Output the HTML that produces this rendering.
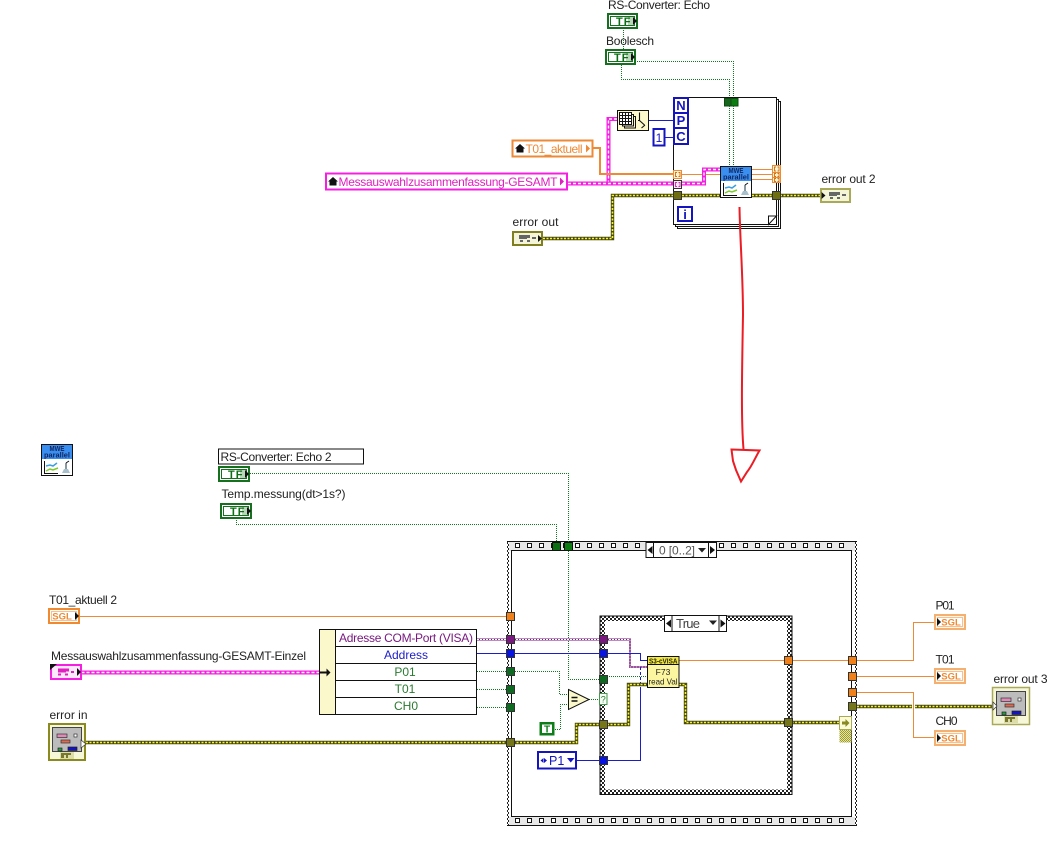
<!DOCTYPE html>
<html><head><meta charset="utf-8"><title>Block Diagram</title>
<style>
html,body{margin:0;padding:0;background:#fff;width:1063px;height:855px;overflow:hidden}
svg{display:block;font-family:"Liberation Sans",sans-serif}
text{fill:#222;font-size:12px}
.g{fill:none;stroke:#0f7a20;stroke-width:1;stroke-dasharray:1 1}
.o{fill:none;stroke:#ee8a35;stroke-width:1}
.b{fill:none;stroke:#1c1cc8;stroke-width:1}
.pu1{fill:none;stroke:#7a1a80;stroke-width:2}
.pu2{fill:none;stroke:#fff;stroke-width:1;stroke-dasharray:2 1}
.p1{fill:none;stroke:#f41fe0;stroke-width:4}
.p2{fill:none;stroke:#fff;stroke-width:1.4;stroke-dasharray:3 2}
.e1{fill:none;stroke:#4a4a0a;stroke-width:3.4}
.e2{fill:none;stroke:#f4f430;stroke-width:1.6;stroke-dasharray:2 1.5}
</style></head><body>
<svg width="1063" height="855" viewBox="0 0 1063 855" xmlns="http://www.w3.org/2000/svg">
<defs>
<pattern id="ck" width="4" height="4" patternUnits="userSpaceOnUse"><rect width="4" height="4" fill="#fff"/><rect width="2" height="2" fill="#222"/><rect x="2" y="2" width="2" height="2" fill="#222"/></pattern>
<pattern id="hole" x="512" y="542" width="12" height="20" patternUnits="userSpaceOnUse"><rect x="3.500" y="1.500" width="4" height="4" fill="#fff" stroke="#111"/></pattern>
<pattern id="hole2" x="512" y="817" width="12" height="20" patternUnits="userSpaceOnUse"><rect x="3.500" y="1.500" width="4" height="4" fill="#fff" stroke="#111"/></pattern>
<pattern id="khaki" width="2" height="2" patternUnits="userSpaceOnUse"><rect width="2" height="2" fill="#e6e6a0"/><rect width="1" height="1" fill="#9a9a30"/><rect x="1" y="1" width="1" height="1" fill="#9a9a30"/></pattern>
</defs>

<!-- TOP: wires outside loop -->
<path class="g" d="M623.500 28V49"/>
<path class="g" d="M637 61.500H733.500V97"/>
<path class="g" d="M621.500 65V79.500H729.500V97"/>
<path class="b" d="M649 120.500H673M665 137.500H673"/>
<path class="p1" d="M617 119H608.500V183"/>
<path class="p2" d="M617 119H608.500V183"/>
<path fill="none" stroke="#ee8a35" stroke-width="2" d="M593 148H600V174H673"/>
<path class="p1" d="M568 183.500H673"/>
<path class="p2" d="M568 183.500H673"/>
<path class="e1" d="M543 238.500H612.500V195.500H673"/>
<path class="e2" d="M543 238.500H612.500V195.500H673"/>
<path class="e1" d="M780 195.500H820"/><path class="e2" d="M780 195.500H820"/>

<!-- For loop -->
<rect x="677.500" y="101.500" width="103" height="127" fill="#fff" stroke="#111"/>
<rect x="675.500" y="99.500" width="103" height="127" fill="#fff" stroke="#111"/>
<rect x="673.500" y="97.500" width="103" height="127" fill="#fff" stroke="#111"/>
<path d="M776.500 216L768.500 224.500V216Z" fill="#fff" stroke="#111"/>
<g fill="#fff" stroke="#1414c0" stroke-width="2">
<rect x="674" y="98" width="14" height="15"/><rect x="674" y="113" width="14" height="15"/><rect x="674" y="128" width="14" height="16"/><rect x="678" y="207" width="14" height="14"/>
</g>
<text x="681" y="110" text-anchor="middle" style="fill:#1414c0;font-size:13px;font-weight:bold">N</text>
<text x="681" y="125" text-anchor="middle" style="fill:#1414c0;font-size:13px;font-weight:bold">P</text>
<text x="681" y="141" text-anchor="middle" style="fill:#1414c0;font-size:13px;font-weight:bold">C</text>
<text x="685" y="219" text-anchor="middle" style="fill:#1414c0;font-size:13px;font-weight:bold">i</text>
<rect x="724.500" y="98.500" width="6.500" height="7.500" fill="#17661d" stroke="#0e4a12"/>
<rect x="731" y="98.500" width="7" height="7.500" fill="#0b7d10" stroke="#0e4a12"/>
<path class="g" d="M729.500 106V166M733.500 106V166"/>
<path class="o" d="M682 174.500H720M752 169.500H772M752 174.500H772M752 179.500H772"/>
<path class="p1" d="M682 183.500H704V169.500H720"/><path class="p2" d="M682 183.500H704V169.500H720"/>
<path class="e1" d="M682 195.500H720M752 195.500H772"/><path class="e2" d="M682 195.500H720M752 195.500H772"/>
<!-- loop tunnels -->
<g fill="#fdf2d0" stroke="#ee8a35"><rect x="673.500" y="170.500" width="8" height="8"/><rect x="772.500" y="165.500" width="8" height="7"/><rect x="772.500" y="172.500" width="8" height="5"/><rect x="772.500" y="177.500" width="8" height="5"/></g>
<rect x="673.500" y="180.500" width="8" height="8" fill="#fde8f8" stroke="#333"/>
<g fill="none" stroke="#d07010" stroke-width=".9"><path d="M677 172.500h-1.500v4h1.500M678.500 172.500h1.500v4h-1.500M776 167h-1.500v4h1.500M777.500 167h1.500v4h-1.500M776 173.500h-1.500v3h1.500M777.500 173.500h1.500v3h-1.500M776 178.500h-1.500v3h1.500M777.500 178.500h1.500v3h-1.500"/></g>
<path d="M677 182.500h-1.500v4h1.500M678.500 182.500h1.500v4h-1.500" fill="none" stroke="#e020c0" stroke-width=".9"/>
<rect x="673.500" y="191.500" width="8" height="8" fill="#6e6e10" stroke="#333"/>
<rect x="772.500" y="191.500" width="8" height="8" fill="#6e6e10" stroke="#333"/>

<!-- MWE icon in loop -->
<g transform="translate(720,166)">
<rect x=".5" y=".5" width="31" height="31" fill="#fff" stroke="#111"/><rect x="1" y="1" width="30" height="14" fill="#3a8ef0"/>
<text x="8.500" y="7" textLength="15" lengthAdjust="spacingAndGlyphs" style="font-size:7px;font-weight:bold;fill:#10245c">MWE</text>
<text x="3" y="13.500" textLength="26" lengthAdjust="spacingAndGlyphs" style="font-size:7px;font-weight:bold;fill:#10245c">parallel</text>
<path d="M3.500 17V29.500H17" fill="none" stroke="#111"/><path d="M5 22l4-1 3 1 4-3" fill="none" stroke="#3aa0e0" stroke-width="1.500"/><path d="M5 27l4-2 3 1 5-2" fill="none" stroke="#7ccc2a" stroke-width="1.500"/>
<path d="M25 19V25" stroke="#8a98a0" stroke-width="2"/><path d="M21 29l2-4h4l2 4z" fill="#a8c0cc"/><path d="M25 19l3-2" stroke="#111"/>
</g>

<!-- terminals top -->
<text x="608" y="9" textLength="102">RS-Converter: Echo</text>
<g transform="translate(607,13)"><rect x="1" y="1" width="29" height="14" fill="#fff" stroke="#17701f" stroke-width="2"/><rect x="3.500" y="3.500" width="24" height="9" fill="#fff" stroke="#17701f"/><rect x="21" y="4" width="6" height="8" fill="#b8d8b8"/><text x="9" y="12" style="font-size:11px;font-weight:bold;fill:#0c6e14;letter-spacing:1px">TF</text><path d="M26 4l4 4-4 4z" fill="#111"/></g>
<text x="606" y="45" textLength="48">Boolesch</text>
<g transform="translate(605,49)"><rect x="1" y="1" width="29" height="14" fill="#fff" stroke="#17701f" stroke-width="2"/><rect x="3.500" y="3.500" width="24" height="9" fill="#fff" stroke="#17701f"/><rect x="21" y="4" width="6" height="8" fill="#b8d8b8"/><text x="9" y="12" style="font-size:11px;font-weight:bold;fill:#0c6e14;letter-spacing:1px">TF</text><path d="M26 4l4 4-4 4z" fill="#111"/></g>

<!-- table icon -->
<rect x="617.500" y="110.500" width="31" height="20" fill="#fbf8cc" stroke="#111"/>
<g fill="none" stroke="#111"><rect x="619.500" y="112.500" width="12" height="12" fill="#fff"/><path d="M622.500 112.500v12M625.500 112.500v12M628.500 112.500v12M619.500 115.500h12M619.500 118.500h12M619.500 121.500h12"/><path d="M631.500 114.500h2v11.500h-11v-1.500M633.500 116.500h2v11.500h-11v-2"/><path d="M639.500 112.500v8l5 4.500m-5-4.500h-1.500M641.500 128l3.500-3" stroke-width="1.100"/></g>
<rect x="653.500" y="129" width="11" height="16.500" fill="#fff" stroke="#1414c0" stroke-width="2"/>
<text x="659" y="142" text-anchor="middle" style="font-size:12px;fill:#1414c0">1</text>

<!-- local vars -->
<rect x="512.500" y="140.500" width="80" height="16" fill="#fff" stroke="#ee8a35" stroke-width="2"/>
<path d="M520 144l-5 4.500h1.500v4h7v-4h1.500z" fill="#111"/>
<text x="525.500" y="153" textLength="57" style="fill:#ee8a35">T01_aktuell</text>
<path d="M586 144.500l4 4-4 4z" fill="#ee8a35"/>
<rect x="326" y="173.500" width="241" height="16" fill="#fff" stroke="#f41fe0" stroke-width="2"/>
<path d="M333 177l-5 4.500h1.500v4h7v-4h1.500z" fill="#111"/>
<text x="338.500" y="186" textLength="219" style="fill:#e020c0">Messauswahlzusammenfassung-GESAMT</text>
<path d="M560 177.500l4 4-4 4z" fill="#e020c0"/>

<text x="512.500" y="226" textLength="46">error out</text>
<g transform="translate(512,231)"><rect x="1" y="1" width="29" height="13" fill="#f4f4d8" stroke="#7f7f20" stroke-width="2"/><path d="M7 4h11v3h-3v1H7zM8 9h3v2H8zM15 9h3v2h-3zM20 6h4v2h-4z" fill="#666"/><path d="M26 4l4 3.500-4 3.500z" fill="#111"/></g>
<text x="821.500" y="183" textLength="54">error out 2</text>
<g transform="translate(820,188)"><rect x="1" y="1" width="29" height="13" fill="#f4f4d8" stroke="#a9a95a" stroke-width="2"/><path d="M1.500 4l4 3.500-4 3.500z" fill="#111"/><path d="M9 4h11v3h-3v1H9zM10 9h3v2h-3zM17 9h3v2h-3zM22 6h4v2h-4z" fill="#666"/></g>

<!-- red arrow -->
<path d="M739.500 207C740 240 743 275 743 315 742 370 741 420 743.500 449" fill="none" stroke="#ec1c24" stroke-width="2"/>
<path d="M731.500 449.500L759.500 450.500C755 458 752 466 747 472L741 481.500 736 470 733 461Z" fill="none" stroke="#ec1c24" stroke-width="2"/>

<!-- MWE icon free -->
<g transform="translate(41,444)">
<rect x=".5" y=".5" width="31" height="31" fill="#fff" stroke="#111"/><rect x="1" y="1" width="30" height="14" fill="#3a8ef0"/>
<text x="8.500" y="7" textLength="15" lengthAdjust="spacingAndGlyphs" style="font-size:7px;font-weight:bold;fill:#10245c">MWE</text>
<text x="3" y="13.500" textLength="26" lengthAdjust="spacingAndGlyphs" style="font-size:7px;font-weight:bold;fill:#10245c">parallel</text>
<path d="M3.500 17V29.500H17" fill="none" stroke="#111"/><path d="M5 22l4-1 3 1 4-3" fill="none" stroke="#3aa0e0" stroke-width="1.500"/><path d="M5 27l4-2 3 1 5-2" fill="none" stroke="#7ccc2a" stroke-width="1.500"/>
<path d="M25 19V25" stroke="#8a98a0" stroke-width="2"/><path d="M21 29l2-4h4l2 4z" fill="#a8c0cc"/><path d="M25 19l3-2" stroke="#111"/>
</g>

<!-- Sequence -->
<rect x="507" y="542" width="350" height="283" fill="#fff"/>
<rect x="507" y="542" width="2" height="283" fill="url(#ck)"/>
<rect x="855" y="542" width="2" height="283" fill="url(#ck)"/>
<rect x="509" y="542" width="346" height="9" fill="#e8e8e8"/>
<rect x="509" y="817" width="346" height="8" fill="#e8e8e8"/>
<rect x="512" y="542" width="336" height="8" fill="url(#hole)"/>
<rect x="512" y="817" width="336" height="8" fill="url(#hole2)"/>
<path d="M507 541.500H857M507 825.500H857" stroke="#111"/>
<rect x="511.500" y="550.500" width="340" height="266" fill="#fff" stroke="#111"/>
<rect x="646" y="542.500" width="70.500" height="15" fill="#fff" stroke="#111"/>
<path d="M653.500 542.500v15M708.500 542.500v15" stroke="#111"/>
<path d="M647.500 550l5-4v8zM710 546l5 4-5 4z" fill="#111"/>
<text x="659" y="554.500" textLength="36" style="fill:#555">0 [0..2]</text>
<path d="M698 548h8l-4 4.500z" fill="#222"/>

<!-- Case -->
<rect x="600" y="616" width="192" height="178.500" fill="url(#ck)" stroke="#111"/>
<rect x="605" y="621" width="182" height="168.500" fill="#fff"/>
<rect x="664.500" y="615.500" width="62" height="16" fill="#fff" stroke="#111"/>
<path d="M672 615.500v16M719 615.500v16" stroke="#111"/>
<path d="M666 623.500l5-4v8zM720.500 619.500l5 4-5 4z" fill="#111"/>
<text x="676" y="628" textLength="24" style="font-size:13px;fill:#444">True</text>
<path d="M709 620.500h8l-4 4.500z" fill="#222"/>

<!-- wires bottom -->
<path class="g" d="M250 473.500H568.500V679.500H599"/>
<path class="g" d="M236.500 518V524.500H556.500V542"/>
<path class="o" d="M80 616.500H507"/>
<path class="p1" d="M81.500 672.500H320"/><path class="p2" d="M81.500 672.500H320"/>
<path class="pu1" d="M477 639.500H630V667H647"/><path class="pu2" d="M477 639.500H630V667H647"/>
<path class="b" d="M477 653.500H640.500V660.500H647"/>
<path class="b" d="M576.500 760.500H640.500V688"/>
<path class="b" d="M640.500 667V688" style="stroke-dasharray:3 2"/>
<path class="g" d="M477 671.500H559.500V694.500H568M477 689.500H507M477 707.500H507"/>
<path class="g" d="M555 729.500H560.500V704.500H568M589 699.500H599M607 676.500H647"/>
<path class="e1" d="M86 742.500H576.500V724.500H628.500V684.500H647"/><path class="e2" d="M86 742.500H576.500V724.500H628.500V684.500H647"/>
<path class="e1" d="M679 684.500H685.500V722.500H839"/><path class="e2" d="M679 684.500H685.500V722.500H839"/>
<path class="o" d="M679 660.500H848M857 660.500H913.500V622.500H934.500M857 676.500H934.500M857 692.500H913.500V737.500H934.500"/>
<path class="e1" d="M857 706.500H912M915 706.500H993"/><path class="e2" d="M857 706.500H912M915 706.500H993"/>

<!-- tunnels -->
<rect x="552.500" y="542.500" width="8" height="8" fill="#0b6e10" stroke="#111"/>
<rect x="564.500" y="542.500" width="8" height="8" fill="#0b7d10" stroke="#111"/>
<g stroke="#333">
<rect x="506.500" y="612.500" width="8" height="8" fill="#f0801a"/>
<rect x="506.500" y="635.500" width="8" height="8" fill="#7a1a80"/>
<rect x="506.500" y="649.500" width="8" height="8" fill="#0a14e0"/>
<rect x="506.500" y="667.500" width="8" height="8" fill="#0e6a20"/>
<rect x="506.500" y="685.500" width="8" height="8" fill="#0e6a20"/>
<rect x="506.500" y="703.500" width="8" height="8" fill="#0e6a20"/>
<rect x="506.500" y="738.500" width="8" height="8" fill="#75751a"/>
<rect x="599.500" y="635.500" width="8" height="8" fill="#7a1a80"/>
<rect x="599.500" y="649.500" width="8" height="8" fill="#0a14e0"/>
<rect x="599.500" y="675.500" width="8" height="8" fill="#0e6a20"/>
<rect x="599.500" y="720.500" width="8" height="8" fill="#75751a"/>
<rect x="599.500" y="756.500" width="8" height="8" fill="#0a14e0"/>
<rect x="784.500" y="656.500" width="8" height="8" fill="#f0801a"/>
<rect x="784.500" y="718.500" width="8" height="8" fill="#75751a"/>
<rect x="848.500" y="656.500" width="8" height="8" fill="#f0801a"/>
<rect x="848.500" y="672.500" width="8" height="8" fill="#f0801a"/>
<rect x="848.500" y="688.500" width="8" height="8" fill="#f0801a"/>
<rect x="848.500" y="702.500" width="8" height="8" fill="#75751a"/>
</g>
<rect x="599.500" y="693.500" width="7.500" height="11" fill="#f2fff2" stroke="#3f9a4a"/>
<text x="603.300" y="702.500" text-anchor="middle" style="font-size:9px;fill:#2a7a30">?</text>
<rect x="839.500" y="716.500" width="12" height="13" fill="#fbfbd8" stroke="#a9a95a"/>
<path d="M842 721.500h3.500v-2.500l4 4-4 4v-2.500H842z" fill="#8a8a20"/>
<rect x="839.500" y="730" width="12" height="12.500" fill="url(#khaki)"/>

<!-- Equal, T constant, P1 -->
<path d="M568.500 689.500L589 699.500 568.500 709.500Z" fill="#fbf8cc" stroke="#111"/>
<path d="M571.500 697.500h6M571.500 701h6" stroke="#111" stroke-width="1.500"/>
<rect x="539.500" y="722" width="15" height="13.500" fill="#0d7d1a"/>
<rect x="542" y="724.500" width="10" height="8.500" fill="#fff"/>
<text x="547" y="732.700" text-anchor="middle" style="font-size:10px;font-weight:bold;fill:#0d7d1a">T</text>
<rect x="538" y="752" width="38" height="16.500" fill="#fff" stroke="#1414c0" stroke-width="2"/>
<path d="M540.500 760.500l3-2.500v5zM547 760.500l-3-2.500v5z" fill="#1414c0"/>
<text x="549" y="765" style="font-size:12.500px;fill:#1414c0">P1</text>
<path d="M567 758h7.500l-3.750 4.500z" fill="#1414c0"/>

<!-- F73 -->
<rect x="647.500" y="656.500" width="31.500" height="31" fill="#fdf6a0" stroke="#111"/>
<rect x="647.500" y="656.500" width="31.500" height="8" fill="#f5ea3c" stroke="#111"/>
<text x="649" y="663.500" textLength="28.500" lengthAdjust="spacingAndGlyphs" style="font-size:7.500px;font-weight:bold;fill:#222">S3-cVISA</text>
<text x="663" y="675" text-anchor="middle" style="font-size:8.500px;fill:#222">F73</text>
<text x="648.500" y="684.500" textLength="29" lengthAdjust="spacingAndGlyphs" style="font-size:8.500px;fill:#222">read Val</text>

<!-- Cluster -->
<rect x="319.500" y="629.500" width="157" height="85" fill="#fff" stroke="#111"/>
<rect x="320" y="630" width="15.500" height="84" fill="#fbf8cc"/>
<path d="M335.500 629.500V714.500M335.500 646.500H476.500M335.500 663.500H476.500M335.500 680.500H476.500M335.500 697.500H476.500" stroke="#111" fill="none"/>
<text x="339" y="642" textLength="134" style="fill:#7a1a80">Adresse COM-Port (VISA)</text>
<text x="406" y="659" text-anchor="middle" style="fill:#1c1cc8">Address</text>
<text x="405" y="676" text-anchor="middle" style="fill:#2a7a30">P01</text>
<text x="405" y="693" text-anchor="middle" style="fill:#2a7a30">T01</text>
<text x="406" y="710" text-anchor="middle" style="fill:#2a7a30">CH0</text>
<path d="M320 671.500h6.500v-3l4 4-4 4v-3H320z" fill="#111"/>

<!-- left terminals -->
<rect x="218.500" y="449" width="145" height="15" fill="#fff" stroke="#111"/>
<text x="220.500" y="461" textLength="111">RS-Converter: Echo 2</text>
<g transform="translate(218,466)"><rect x="1" y="1" width="30" height="14" fill="#fff" stroke="#17701f" stroke-width="2"/><rect x="3.500" y="3.500" width="25" height="9" fill="#fff" stroke="#17701f"/><rect x="22" y="4" width="6" height="8" fill="#b8d8b8"/><text x="10" y="12" style="font-size:11px;font-weight:bold;fill:#0c6e14;letter-spacing:1px">TF</text><path d="M27 4l4 4-4 4z" fill="#111"/></g>
<text x="221.500" y="498" textLength="124">Temp.messung(dt&gt;1s?)</text>
<g transform="translate(220,503)"><rect x="1" y="1" width="30" height="14" fill="#fff" stroke="#17701f" stroke-width="2"/><rect x="3.500" y="3.500" width="25" height="9" fill="#fff" stroke="#17701f"/><rect x="22" y="4" width="6" height="8" fill="#b8d8b8"/><text x="10" y="12" style="font-size:11px;font-weight:bold;fill:#0c6e14;letter-spacing:1px">TF</text><path d="M27 4l4 4-4 4z" fill="#111"/></g>

<text x="49" y="604" textLength="68">T01_aktuell 2</text>
<g transform="translate(48,608)"><rect x="1" y="1" width="30" height="14" fill="#fff" stroke="#f08a30" stroke-width="2"/><rect x="3.500" y="3.500" width="25" height="9" fill="#fff" stroke="#f8c090"/><text x="14" y="11.500" text-anchor="middle" style="font-size:9.500px;font-weight:bold;fill:#f08a30">SGL</text><path d="M27 4l4 4-4 4z" fill="#111"/></g>

<text x="51" y="660" textLength="255">Messauswahlzusammenfassung-GESAMT-Einzel</text>
<g transform="translate(50,664)"><rect x="1" y="1" width="30" height="14" fill="#fbe8fb" stroke="#f41fe0" stroke-width="2"/><path d="M8 4.500h11v3h-3v1H8zM8 9.500h3v2H8zM15 9.500h3v2h-3zM21 7h3v2h-3z" fill="#e020c0"/><path d="M0 0h7l-7 6z" fill="#111"/><path d="M27 4l4 4-4 4z" fill="#111"/></g>

<text x="49.500" y="719" textLength="38">error in</text>
<g transform="translate(48,723)">
<rect x="1" y="1" width="36" height="36" fill="#f6f6d8" stroke="#8a8a20" stroke-width="2"/>
<rect x="4.500" y="4.500" width="29" height="24" fill="#bcbcbc" stroke="#444"/>
<rect x="9" y="11" width="10" height="3.500" fill="#e08ab8" stroke="#333" stroke-width=".7"/><rect x="26" y="11" width="3" height="3" fill="#fff" stroke="#333" stroke-width=".7"/>
<rect x="13" y="17" width="9" height="3" fill="#e06a50" stroke="#333" stroke-width=".7"/>
<rect x="10" y="25" width="4" height="3" fill="#2a9a40" stroke="#222" stroke-width=".7"/><rect x="20" y="24" width="9" height="3.500" fill="#1414c0" stroke="#222" stroke-width=".7"/>
<rect x="12" y="29" width="14" height="7" fill="#ddddaa"/><path d="M13 30h10v2h-3v3h-2v-3h-2v3h-3z" fill="#777730"/>
<path d="M33 17l5 4-5 4z" fill="#fff" stroke="#333" stroke-width=".7"/>
</g>

<!-- right indicators -->
<text x="935.500" y="609.500" textLength="19">P01</text>
<text x="935.500" y="663.500" textLength="19">T01</text>
<text x="935.500" y="725" textLength="22">CH0</text>
<text x="993.500" y="683" textLength="54">error out 3</text>
<g transform="translate(934,614)"><rect x="1" y="1" width="30" height="14" fill="#fff6ec" stroke="#f4b070" stroke-width="2"/><rect x="3.500" y="3.500" width="25" height="9" fill="#fff" stroke="#f8c090"/><path d="M3 4l4 4-4 4z" fill="#111"/><text x="17" y="11.500" text-anchor="middle" style="font-size:9.500px;font-weight:bold;fill:#f08a30">SGL</text></g>
<g transform="translate(934,668)"><rect x="1" y="1" width="30" height="14" fill="#fff6ec" stroke="#f4b070" stroke-width="2"/><rect x="3.500" y="3.500" width="25" height="9" fill="#fff" stroke="#f8c090"/><path d="M3 4l4 4-4 4z" fill="#111"/><text x="17" y="11.500" text-anchor="middle" style="font-size:9.500px;font-weight:bold;fill:#f08a30">SGL</text></g>
<g transform="translate(934,730)"><rect x="1" y="1" width="30" height="14" fill="#fff6ec" stroke="#f4b070" stroke-width="2"/><rect x="3.500" y="3.500" width="25" height="9" fill="#fff" stroke="#f8c090"/><path d="M3 4l4 4-4 4z" fill="#111"/><text x="17" y="11.500" text-anchor="middle" style="font-size:9.500px;font-weight:bold;fill:#f08a30">SGL</text></g>
<g transform="translate(992,687)">
<rect x=".5" y=".5" width="37" height="37" fill="#f6f6d8" stroke="#a9a95a" stroke-width="1.500"/>
<rect x="4.500" y="4.500" width="29" height="24" fill="#bcbcbc" stroke="#444"/>
<rect x="9" y="11" width="10" height="3.500" fill="#e08ab8" stroke="#333" stroke-width=".7"/><rect x="26" y="11" width="3" height="3" fill="#fff" stroke="#333" stroke-width=".7"/>
<rect x="13" y="17" width="9" height="3" fill="#e06a50" stroke="#333" stroke-width=".7"/>
<rect x="10" y="25" width="4" height="3" fill="#2a9a40" stroke="#222" stroke-width=".7"/><rect x="20" y="24" width="9" height="3.500" fill="#1414c0" stroke="#222" stroke-width=".7"/>
<rect x="12" y="29" width="14" height="7" fill="#ddddaa"/><path d="M13 30h10v2h-3v3h-2v-3h-2v3h-3z" fill="#777730"/>
<path d="M1 15l4 4-4 4z" fill="#fff" stroke="#333" stroke-width=".7"/>
</g>
</svg>
</body></html>
